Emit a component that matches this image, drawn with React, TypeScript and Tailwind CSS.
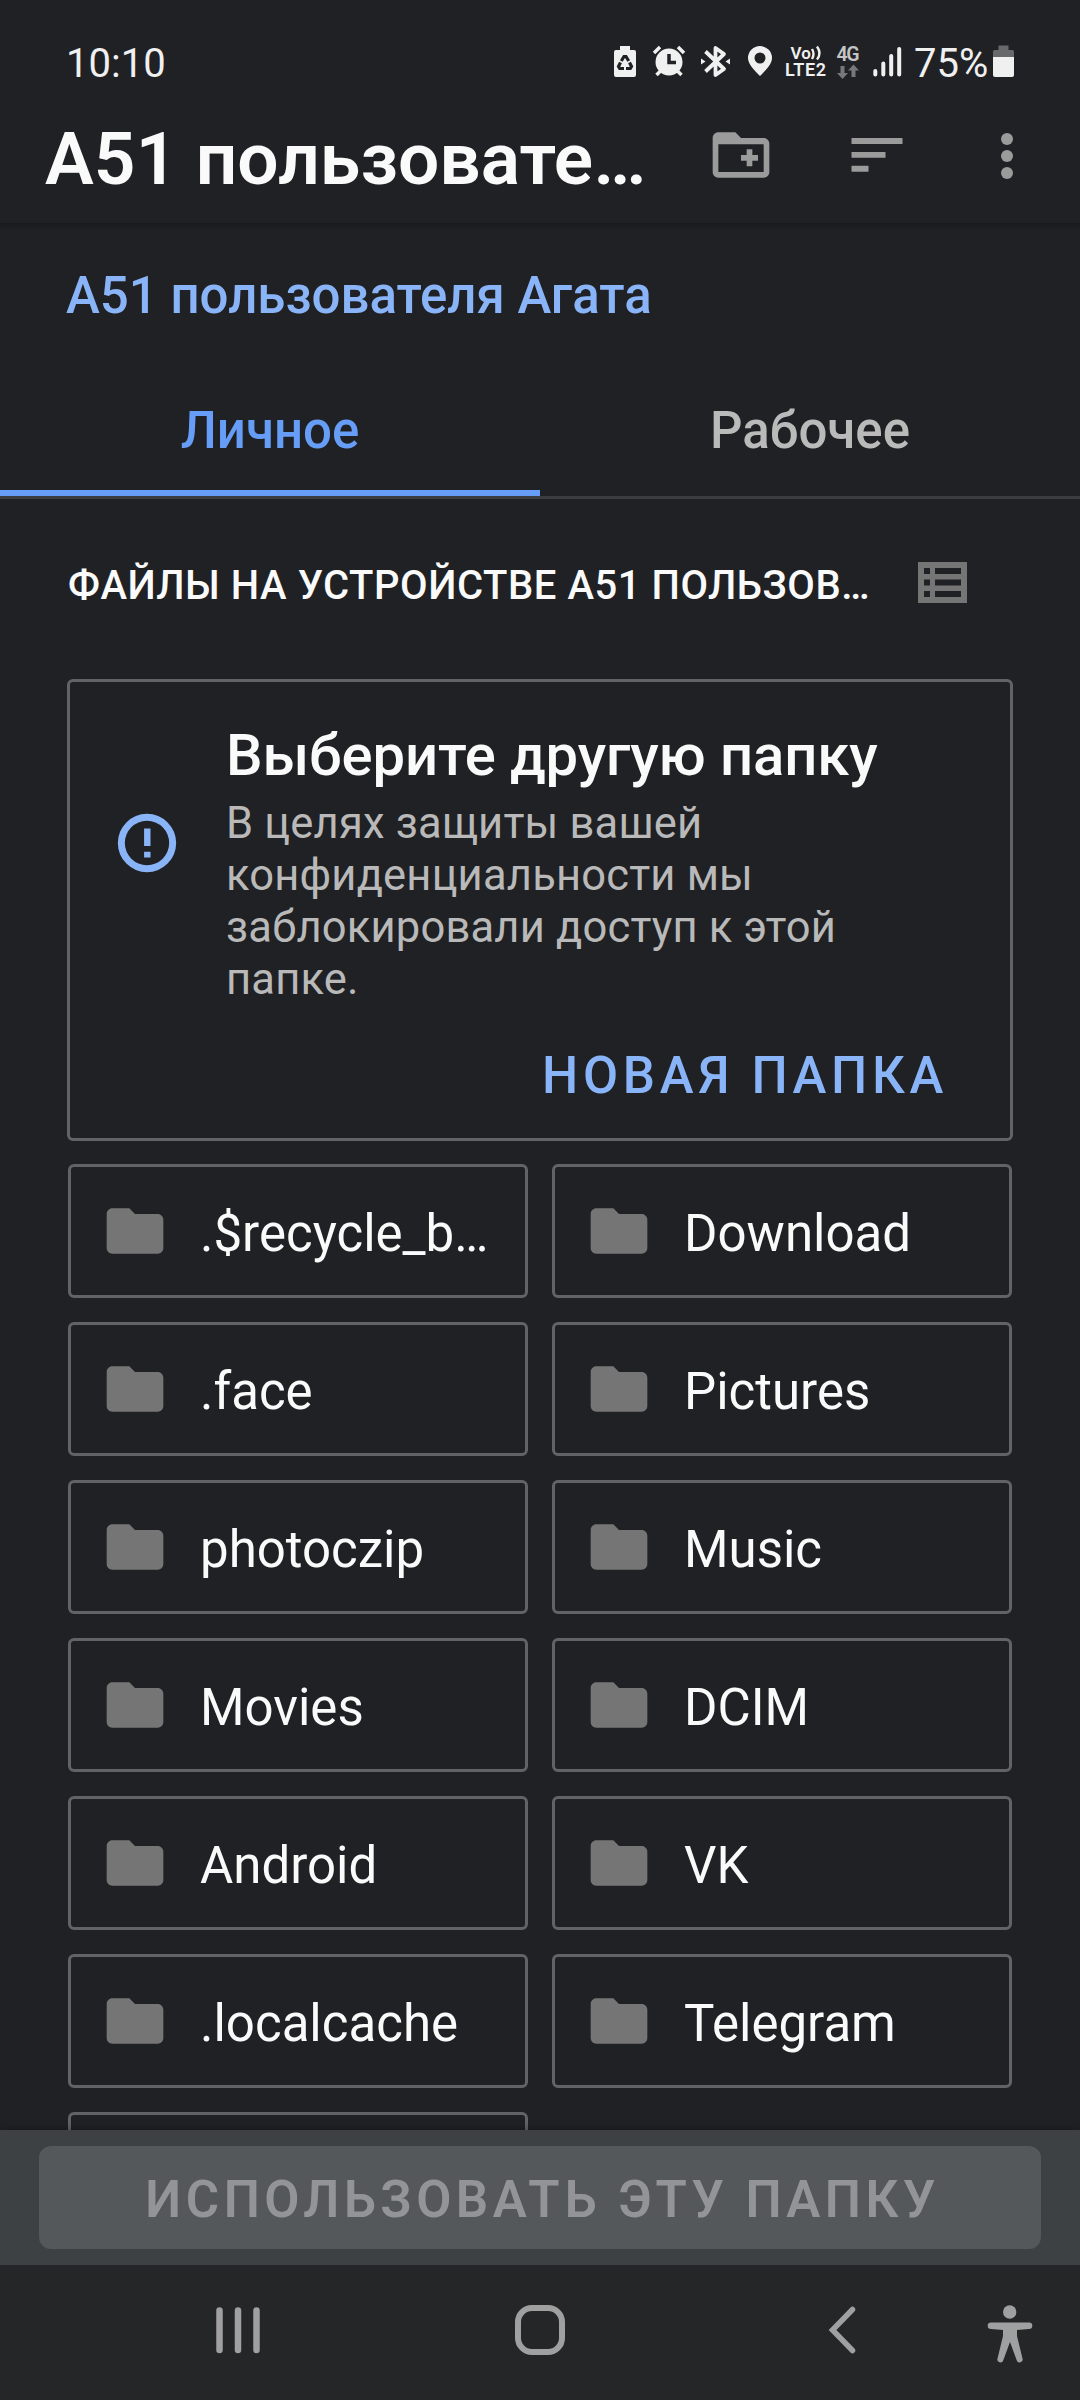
import type { ReactNode } from "react";

const FOLDERS = [
  ".$recycle_b…",
  "Download",
  ".face",
  "Pictures",
  "photoczip",
  "Music",
  "Movies",
  "DCIM",
  "Android",
  "VK",
  ".localcache",
  "Telegram",
  "",
];

function MaterialIcon({ d, className }: { d: string; className: string }) {
  return (
    <svg viewBox="0 0 24 24" fill="currentColor" className={`shrink-0 ${className}`}>
      <path d={d} />
    </svg>
  );
}

function StatusBar() {
  return (
    <div className="flex h-[100px] shrink-0 items-start justify-between pl-[66px] text-[#f0f0f0]">
      <span className="pt-[40px] text-[40px] leading-[48px]">10:10</span>

      {/* The whole icon strip shares one coordinate space */}
      <svg width="470" height="100" viewBox="610 0 470 100" fill="#f0f0f0" className="shrink-0">
        {/* recycle battery */}
        <path d="M620 46h10v4h4a2 2 0 0 1 2 2v23a2 2 0 0 1-2 2h-18a2 2 0 0 1-2-2V52a2 2 0 0 1 2-2h4z" />
        <g fill="none" stroke="#202124" strokeWidth="3.2">
          <path d="M621.300 61l2.700-4.500h2l2.700 4.500" />
          <path d="M629.500 62.500l2 4-1.200 2h-4.300" />
          <path d="M624 68.500h-4.300l-1.200-2 2-4" />
        </g>
        {/* alarm */}
        <circle cx="669" cy="62" r="13.500" />
        <path d="M654 53l6-6M684 53l-6-6M656.500 75l5-5M681.500 75l-5-5" stroke="#f0f0f0" strokeWidth="3.500" />
        <path d="M669 54v8.500h7" fill="none" stroke="#202124" strokeWidth="3.500" />
        {/* bluetooth */}
        <path d="M705.500 51.500l18.500 17.500-8.500 6V48l8.500 6-18.500 17.500" fill="none" stroke="#f0f0f0" strokeWidth="3.800" strokeLinejoin="round" />
        <path d="M701 58.500l4.500 3-4.500 3zM730 58.500l-4.500 3 4.500 3z" />
        {/* location */}
        <path fillRule="evenodd" d="M760 46a12 12 0 0 1 12 12c0 6-6 12-12 18-6-6-12-12-12-18a12 12 0 0 1 12-12zm0 6.500a5.500 5.500 0 1 0 0 11 5.500 5.500 0 0 0 0-11z" />
        <text x="790.500" y="58.700" fontSize="17" fontWeight="600">Vo</text>
        <path d="M812 49q3 5 0 10M817 46.500q5 7 0 13" fill="none" stroke="#f0f0f0" strokeWidth="2.400" />
        <text x="785" y="76" fontSize="18" fontWeight="600" textLength="41">LTE2</text>
        <text x="836.500" y="60.700" fontSize="19.500" fontWeight="600" fill="#c4c4c4" textLength="23">4G</text>
        <path d="M840.500 66h4v7h3.500l-5.500 6-5.500-6h3.500zM851.500 77h4v-6.500h3.500l-5.500-6-5.500 6h3.500z" fill="#77787a" />
        <path d="M875.300 71v3.500M883.300 63.500v11M891.200 56v18.500M899.200 49v25.500" stroke="#f0f0f0" strokeWidth="4" strokeLinecap="round" />
        <text x="914" y="77" fontSize="40">75%</text>
        <path d="M998.500 45.500h10v4.500h4q1.500 0 1.500 1.500v7h-21v-7q0-1.500 1.500-1.500h4z" fill="#68696b" />
        <path d="M993 57h21v18q0 2-2 2h-17q-2 0-2-2z" />
      </svg>
    </div>
  );
}

function AppBar() {
  return (
    <header className="flex h-[123px] shrink-0 items-start">
      <h1 className="ml-[45px] w-[657px] pt-[11px] text-[73px] leading-[96px] font-[560] tracking-[0.1px] text-[#fafafa]">
        A51 пользовате…
      </h1>
      <MaterialIcon
        className="mt-[21px] ml-[5px] size-[68px] text-[#9b9b9b]"
        d="M20 6h-8l-2-2H4c-1.100 0-2 .9-2 2v12c0 1.100.9 2 2 2h16c1.100 0 2-.9 2-2V8c0-1.100-.9-2-2-2zm0 12H4V8.200h16V18zm-8-4h2v2h2v-2h2v-2h-2v-2h-2v2h-2z"
      />
      <MaterialIcon className="mt-[21px] ml-[68px] size-[68px] text-[#9b9b9b]" d="M3 17.900h6v-2.100H3v2.100zM3 6v2.100h18V6H3zm0 7h12v-2.100H3V13z" />
      <svg viewBox="0 0 68 68" fill="#9b9b9b" className="mt-[22px] ml-[62px] size-[68px] shrink-0">
        <circle cx="34" cy="17" r="6" />
        <circle cx="34" cy="34" r="6" />
        <circle cx="34" cy="51" r="6" />
      </svg>
    </header>
  );
}

function Tab({ active, children }: { active?: boolean; children: ReactNode }) {
  return (
    <div
      className={`flex h-full flex-1 justify-center border-b-6 pt-[24px] text-[51px] leading-[60px] font-medium ${
        active ? "border-[#669df6] text-[#669df6]" : "border-transparent text-[#bababa]"
      }`}
    >
      {children}
    </div>
  );
}

function BlockedCard() {
  return (
    <section className="mx-[67px] h-[462px] shrink-0 rounded-md border-3 border-[#616365]">
      <div className="flex items-start">
        <MaterialIcon
          className="mt-[126px] ml-[42px] size-[70px] text-[#8ab4f8]"
          d="M11 15h2.200v2H11zm0-8h2.200v6H11zM12 2a10 10 0 1 0 0 20 10 10 0 0 0 0-20zm0 17.600a7.600 7.600 0 1 1 0-15.200 7.600 7.600 0 0 1 0 15.200z"
        />
        <div className="pt-[39px] pl-[44px]">
          <h2 className="text-[58px] leading-[68px] font-[550] tracking-[-0.1px] text-[#fafafa]">Выберите другую папку</h2>
          <p className="mt-[9px] w-[640px] text-[43.5px] leading-[52px] tracking-[0.2px] text-[#b9b9b9]">
            В целях защиты вашей конфиденциальности мы заблокировали доступ к этой папке.
          </p>
        </div>
      </div>
      <div className="mt-[40px] flex justify-end pr-[62px] text-[51px] leading-[60px] font-medium tracking-[4.7px] text-[#8ab4f8]">
        НОВАЯ ПАПКА
      </div>
    </section>
  );
}

function FolderTile({ name }: { name: string }) {
  return (
    <div className="flex h-[134px] items-center rounded-md border-3 border-[#616365] pl-[30px]">
      <MaterialIcon
        className="size-[68px] text-[#757575]"
        d="M10 4H4c-1.100 0-1.990.9-1.990 2L2 18c0 1.100.9 2 2 2h16c1.100 0 2-.9 2-2V8c0-1.100-.9-2-2-2h-8l-2-2z"
      />
      <span className="ml-[31px] pt-[5px] text-[51px] leading-[60px] whitespace-nowrap text-[#fafafa]">{name}</span>
    </div>
  );
}

function NavBar() {
  return (
    <nav className="flex h-[135px] shrink-0 items-start bg-[#252628] pt-[25px] pl-[198px] text-[#a0a0a0]">
      <svg width="80" height="80" viewBox="0 0 80 80" stroke="currentColor" strokeWidth="6.500" strokeLinecap="round" className="shrink-0">
        <path d="M21.500 20.500v39.500M40 20.500v39.500M58.500 20.500v39.500" />
      </svg>
      <svg width="80" height="80" viewBox="0 0 80 80" fill="none" stroke="currentColor" strokeWidth="6" className="ml-[222px] shrink-0">
        <rect x="18" y="18" width="44" height="44" rx="14" />
      </svg>
      <svg
        width="80"
        height="80"
        viewBox="0 0 80 80"
        fill="none"
        stroke="currentColor"
        strokeWidth="5.500"
        strokeLinecap="round"
        className="ml-[222px] shrink-0"
      >
        <path d="M50.500 19.500L30.500 40 50.500 60.500" />
      </svg>
      <svg width="80" height="80" viewBox="0 0 80 80" fill="currentColor" className="ml-[88px] shrink-0">
        <circle cx="39.700" cy="22" r="6.700" />
        <path d="M21 32.500h38a3.200 3.200 0 0 1 0 6.600l-12 1v6l5.500 22.500a3 3 0 0 1-5.800 1.700L40 52l-6.700 18.300a3 3 0 0 1-5.800-1.700L33 46.100v-6l-12-1a3.200 3.200 0 0 1 0-6.600z" />
      </svg>
    </nav>
  );
}

export default function App() {
  return (
    <div className="flex h-[2400px] w-[1080px] flex-col overflow-hidden bg-[#202124] font-[Roboto,sans-serif]">
      <StatusBar />
      <AppBar />
      <div className="h-[8px] shrink-0 bg-gradient-to-b from-[#1a1b1d] to-[#202124]" />

      <div className="h-[146px] shrink-0 pt-[35px] pl-[66px] text-[51px] leading-[60px] font-medium text-[#8ab4f8]">
        A51 пользователя Агата
      </div>

      <div className="flex h-[122px] shrink-0 border-b-3 border-[#3a3c3f]">
        <Tab active>Личное</Tab>
        <Tab>Рабочее</Tab>
      </div>

      <div className="flex h-[180px] shrink-0 items-start pl-[68px]">
        <h2 className="w-[840px] pt-[63px] text-[40px] leading-[48px] font-medium tracking-[0.55px] whitespace-nowrap text-[#fafafa]">
          ФАЙЛЫ НА УСТРОЙСТВЕ A51 ПОЛЬЗОВ…
        </h2>
        <svg width="49" height="41" viewBox="0 0 49 41" className="mt-[63px] ml-[10px] shrink-0">
          <path d="M0 0h49v41H0z" fill="#757575" />
          <path d="M6 6h6v6H6zM17 6h26v6H17zM6 17.500h6v6H6zM17 17.500h26v6H17zM6 29h6v6H6zM17 29h26v6H17z" fill="#202124" />
        </svg>
      </div>

      <BlockedCard />

      <div className="mx-[68px] mt-[23px] grid min-h-0 flex-1 auto-rows-[134px] grid-cols-2 gap-6 overflow-hidden">
        {FOLDERS.map((name) => (
          <FolderTile key={name} name={name} />
        ))}
      </div>

      <div className="flex h-[135px] shrink-0 items-center bg-[#3e4144] px-[39px] shadow-[0_-1px_8px_rgba(0,0,0,0.3)]">
        <div className="flex h-[103px] w-full items-center justify-center rounded-xl bg-[#54585b] pt-[5px] pl-[5px] text-[51px] leading-[60px] font-[570] tracking-[4.57px] text-[#939497]">
          ИСПОЛЬЗОВАТЬ ЭТУ ПАПКУ
        </div>
      </div>

      <NavBar />
    </div>
  );
}
